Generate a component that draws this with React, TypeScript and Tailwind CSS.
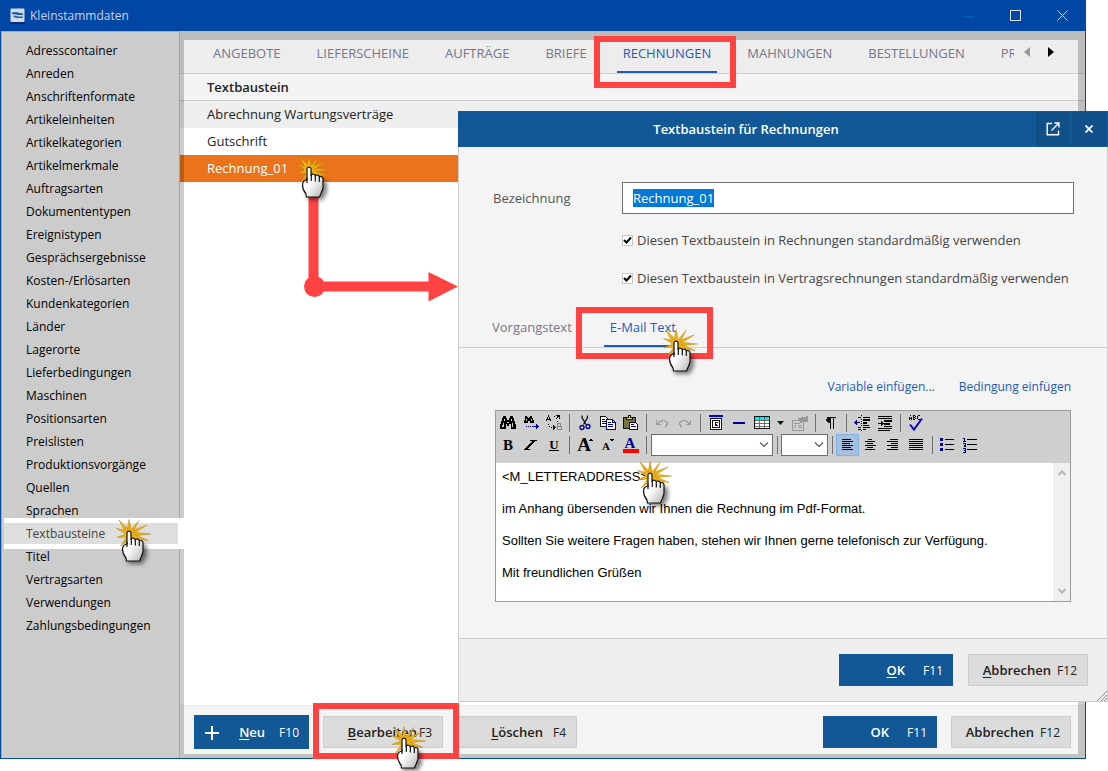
import React, { useEffect, useRef } from "react";

const navItems = [
  "Adresscontainer", "Anreden", "Anschriftenformate", "Artikeleinheiten", "Artikelkategorien",
  "Artikelmerkmale", "Auftragsarten", "Dokumententypen", "Ereignistypen", "Gesprächsergebnisse",
  "Kosten-/Erlösarten", "Kundenkategorien", "Länder", "Lagerorte", "Lieferbedingungen", "Maschinen",
  "Positionsarten", "Preislisten", "Produktionsvorgänge", "Quellen", "Sprachen", "Textbausteine",
  "Titel", "Vertragsarten", "Verwendungen", "Zahlungsbedingungen",
];

const docTabs = ["ANGEBOTE", "LIEFERSCHEINE", "AUFTRÄGE", "BRIEFE", "RECHNUNGEN", "MAHNUNGEN", "BESTELLUNGEN"];

const mailText = [
  "<M_LETTERADDRESS>",
  "im Anhang übersenden wir Ihnen die Rechnung im Pdf-Format.",
  "Sollten Sie weitere Fragen haben, stehen wir Ihnen gerne telefonisch zur Verfügung.",
  "Mit freundlichen Grüßen",
].join("\n\n");

/* ---------- shared pieces ---------- */

function Hand({ className }: { className: string }) {
  return (
    <svg className={`pointer-events-none absolute z-30 ${className}`} width="44" height="52" viewBox="-16 -14 44 52" aria-hidden="true">
      <defs>
        <linearGradient id="palm" x1="0" y1="0" x2="1" y2="1">
          <stop offset="0.45" stopColor="#fff" />
          <stop offset="1" stopColor="#b4b4b4" />
        </linearGradient>
        <filter id="soft" x="-50%" y="-50%" width="200%" height="200%">
          <feGaussianBlur stdDeviation="2" />
        </filter>
      </defs>
      <path d="M-4 10 L-6 16 L-3 30 H12 L16 22 V12 L4 6 Z" transform="translate(2 3)" fill="#000" opacity="0.5" filter="url(#soft)" />
      <g fill="#ecb112" stroke="#b88408" strokeWidth="0.5" strokeLinejoin="round">
        <path d="M0 -1 L-10 -11 L-4.500 -0.500 Z" />
        <path d="M-2 0 L0 -11.500 L2.500 0 Z" />
        <path d="M1 0 L10 -10.500 L4 1 Z" />
        <path d="M2 0 L18 -6 L4 3 Z" />
        <path d="M2 1 L21.500 3 L3 5 Z" />
        <path d="M2 2 L19 9.500 L3 7 Z" />
        <path d="M-1 0 L-12.500 -2.500 L-2 3.500 Z" />
        <path d="M-1 2 L-12 6.500 L-1 6 Z" />
        <path d="M-1 4 L-8.500 15 L2 7 Z" />
        <circle cx="0" cy="3" r="5" stroke="none" />
      </g>
      <path
        d="M-2 2 C-2 -0.500 2 -0.500 2 2 V8.500 C3 6.500 6 7 6.300 9 C7.500 7.200 10 8 10.300 10 C12 8.800 14 10 14 12 V20 C14 23 12.500 25 11.500 27.500 L10.500 30 H-2.500 L-3 27 C-5.500 24 -6.500 22 -6.500 18 C-6.500 15 -5 13.500 -2 13 Z"
        fill="url(#palm)"
        stroke="#111"
        strokeWidth="1.200"
        strokeLinejoin="round"
      />
      <path d="M-2 11 V16 M2.300 8 V14 M6.300 9 V14.500 M10.300 10 V15" stroke="#111" strokeWidth="1.200" fill="none" />
    </svg>
  );
}

function Frame({ className }: { className: string }) {
  return <div className={`pointer-events-none absolute z-20 border-[6px] border-[#ff4343] ${className}`} />;
}

type ActionProps = { children: React.ReactNode; hotkey: string; primary?: boolean; className?: string; icon?: React.ReactNode };
function Action({ children, hotkey, primary, className = "", icon }: ActionProps) {
  const tone = primary ? "bg-[#125796] text-white" : "border border-[#cdcdcd] bg-[#dcdcdc] text-[#222]";
  return (
    <button type="button" className={`relative flex h-8 shrink-0 items-center justify-end pt-0.5 pr-2.5 text-[13px] ${tone} ${className}`}>
      {icon}
      <span className="font-semibold underline-offset-2">{children}</span>
      <span className="text-[12px]">{hotkey}</span>
    </button>
  );
}

/* ---------- editor toolbar ---------- */

function Tool({ label, children, active }: { label: string; children: React.ReactNode; active?: boolean }) {
  return (
    <button
      type="button"
      aria-label={label}
      className={`flex h-[22px] w-[23px] shrink-0 items-center justify-center ${active ? "border border-[#7cb4e8] bg-[#a5c0dc]" : ""}`}
    >
      <svg width="18" height="18" viewBox="0 0 18 18" shapeRendering="crispEdges" fill="none" className="overflow-visible">
        {children}
      </svg>
    </button>
  );
}

function Sep() {
  return (
    <span className="flex h-[22px] w-2 shrink-0 justify-center py-0.5">
      <span className="w-px bg-[#6f6f6f]" />
    </span>
  );
}

function Lines({ rows, color = "#000" }: { rows: number[][]; color?: string }) {
  return (
    <g fill={color}>
      {rows.map(([x, y, w], i) => (
        <rect key={i} x={x} y={y} width={w} height="1" />
      ))}
    </g>
  );
}

function Toolbar() {
  return (
    <div className="flex flex-col bg-[#cfcfcf] pt-px pb-[7px]">
      <div className="flex">
        <Tool label="Suchen">
          <path fill="#000" d="M4 2h3v2h1v2h2V4h1V2h3v2h1v3h1v3h1v5h-5v-5h-2v2H8v-2H7v5H1v-5h1V7h1V4h1z" />
          <path fill="#cfcfcf" d="M5 5h1v2H5zM12 5h1v2h-1zM4 9h1v4H3v-2h1zM13 9h1v4h-1zM8 8h2v1H8z" />
        </Tool>
        <Tool label="Weitersuchen">
          <path fill="#000" d="M3 2h2v1h1v1h1V3h1V2h2v2h1v2h1v3H8V7H6v2H2V6h1z" />
          <path fill="#cfcfcf" d="M4 5h1v2H4zM9 5h1v2H9z" />
          <path fill="#000090" d="M4 12h1v1H4zM6 12h1v1H6zM8 12h1v1H8zM10 12h4v-2h1v1h1v1h1v1h-1v1h-1v1h-1v-2h-4z" />
        </Tool>
        <Tool label="Ersetzen">
          <path stroke="#111" d="M1.500 7V5M5.500 7V5M2.500 5V3M4.500 5V3M3.500 3V1M2 5.500h3" />
          <path fill="#111" d="M9 2h1v1H9zM11 1h4v4h-1V3h-1v1h-1v1h-1V4h1V2h-1zM12 7h1v1h-1zM3 10h1v1H3zM4 12h1v1H4zM6 13h1v1H6zM8 11h1v1h1v1h1v1h-1v1H9v1H8z" />
          <path stroke="#8a8a8a" d="M12.500 16V9.500H15V12H13M15 12.500h1V15.500h-3" />
        </Tool>
        <Sep />
        <Tool label="Ausschneiden">
          <path stroke="#111" shapeRendering="auto" strokeWidth="1.300" d="M6 1.500v2l4 7M11.500 1.500v2L7.500 10.500" />
          <circle cx="6" cy="13.500" r="2" stroke="#000090" shapeRendering="auto" strokeWidth="1.300" />
          <circle cx="12" cy="12.500" r="2" stroke="#000090" shapeRendering="auto" strokeWidth="1.300" />
        </Tool>
        <Tool label="Kopieren">
          <path fill="#fff" stroke="#111" d="M1.500 2.500h5l3 3v7h-8z" />
          <path stroke="#111" d="M3 5.500h3M3 7.500h4M3 9.500h4" />
          <path fill="#fff" stroke="#000090" d="M7.500 5.500h6l3 3v7h-9z" />
          <path stroke="#000090" d="M9 8.500h3M9 10.500h5M9 12.500h5M13.500 5v3.500h3" />
        </Tool>
        <Tool label="Einfügen">
          <path fill="#77743c" stroke="#111" d="M1.500 3.500h12v11h-12z" />
          <path fill="#e8e35a" stroke="#111" d="M4.500 4.500v-1h2v-2h2v2h2v2h-6z" />
          <path fill="#fff" stroke="#000090" d="M7.500 8.500h6l2 2v5h-8z" />
          <path stroke="#000090" d="M9 10.500h3M9 12.500h5" />
        </Tool>
        <Sep />
        <Tool label="Rückgängig">
          <path fill="#9b9b9b" d="M3 6h1v3h1V8h1V7h2V6h4v1h2v1h1v3h-1v2h-2v-1h1v-2h1V9h-1V8h-1V7H9v1H7v1H6v1h2v1H3z" />
        </Tool>
        <Tool label="Wiederholen">
          <path fill="#9b9b9b" d="M15 6h-1v3h-1V8h-1V7h-2V6H6v1H4v1H3v3h1v2h2v-1H5v-2H4V9h1V8h1V7h3v1h2v1h1v1h-2v1h5z" />
        </Tool>
        <Sep />
        <Tool label="Feld einfügen">
          <path fill="#0000ff" d="M2 1h14v2H2z" />
          <path fill="#fff" stroke="#111" d="M3.500 4.500h11v11h-11z" />
          <path stroke="#111" d="M5.500 6.500h7v7h-7zM11 8.500H8V11M8 10.500h2M8 10v2M8 11.500h3" />
        </Tool>
        <Tool label="Linie">
          <path fill="#000090" d="M3 8h12v2H3z" />
        </Tool>
        <Tool label="Tabelle">
          <path fill="#fff" d="M1 3h16v12H1z" />
          <path fill="#00f0f0" d="M1 3h16v3H1z" />
          <path stroke="#6b6b6b" d="M6.500 3v12M11.500 3v12M1 6.500h16M1 9.500h16M1 12.500h16" />
          <path stroke="#111" d="M1.500 2.500h15v12h-15z" />
        </Tool>
        <button type="button" aria-label="Tabelle auswählen" className="flex h-[22px] w-[15px] shrink-0 items-center justify-center">
          <svg width="7" height="4" viewBox="0 0 7 4"><path d="M0 0h7L3.500 4z" fill="#111" /></svg>
        </button>
        <Tool label="Eigenschaften">
          <path stroke="#999" d="M1.500 6.500h11v10h-11zM3 9.500h6M3 11.500h2M7 11.500h4M3 13.500h2M7 13.500h4" />
          <path fill="#999" d="M7 4h3V3h6v5h-5v1H9V7H7zM15 2h2v6h-2z" />
        </Tool>
        <Sep />
        <Tool label="Absatzmarken">
          <path fill="#111" d="M5 3h9v1h-2v11h-1V4h-2v11H8V9H6V8H5V7H4V5h1z" />
        </Tool>
        <Sep />
        <Tool label="Einzug verkleinern">
          <Lines rows={[[5, 3, 3], [10, 3, 7], [5, 13, 3], [10, 13, 7], [5, 15, 3], [10, 15, 3], [10, 5, 7], [10, 6, 7], [10, 8, 4], [10, 9, 4], [10, 11, 6]]} />
          <path fill="#111" d="M8 1h1v1H8zM8 5h1v1H8zM8 7h1v1H8zM8 9h1v1H8zM8 11h1v1H8zM8 16h1v1H8z" />
          <path fill="#000090" d="M1 8h1V7h1V6h1v2h3v1H4v2H3v-1H2V9H1z" />
        </Tool>
        <Tool label="Einzug vergrößern">
          <Lines rows={[[2, 2, 14], [2, 4, 14], [8, 6, 8], [8, 7, 8], [8, 9, 6], [8, 10, 6], [8, 12, 8], [2, 14, 14], [2, 16, 12]]} />
          <path fill="#111" d="M2 9h3V7h1v1h1v1h1v1H7v1H6v1H5v-2H2z" />
        </Tool>
        <Sep />
        <Tool label="Rechtschreibung">
          <path stroke="#111" d="M2.500 6V2.500M4.500 6V2.500M3 1.500h1M2 4.500h3M6.500 1v5M6 1.500h2M6 3.500h2M6 5.500h2M8.500 2v1M8.500 4v1M13 1.500h-2M10.500 2v3M11 5.500h2" />
          <path stroke="#1200b8" strokeWidth="2" shapeRendering="auto" d="M3 10.500l4 5L15 4.500" />
        </Tool>
      </div>
      <div className="flex">
        <Tool label="Fett">
          <text x="9" y="14" textAnchor="middle" fontFamily="Liberation Serif, serif" fontWeight="700" fontSize="15" fill="#000">B</text>
        </Tool>
        <Tool label="Kursiv">
          <path fill="#000" d="M8 4h7v1h-2v1h-1v1h-1v1h-1v1h-1v1H8v1H7v1H6v1h2v1H2v-1h1v-1h1v-1h1v-1h1V9h1V8h1V7h1V6h1V5H8z" />
        </Tool>
        <Tool label="Unterstrichen">
          <text x="9" y="13" textAnchor="middle" fontFamily="Liberation Serif, serif" fontWeight="700" fontSize="13" fill="#000">U</text>
          <path fill="#000" d="M4 14h10v1H4z" />
        </Tool>
        <Sep />
        <Tool label="Schrift vergrößern">
          <text x="8" y="15" textAnchor="middle" fontFamily="Liberation Serif, serif" fontWeight="700" fontSize="19" fill="#000">A</text>
          <path fill="#000" d="M13 5h4V4h-1V3h-2v1h-1z" />
        </Tool>
        <Tool label="Schrift verkleinern">
          <text x="7" y="14" textAnchor="middle" fontFamily="Liberation Serif, serif" fontWeight="700" fontSize="11" fill="#000">A</text>
          <path fill="#000" d="M11 3h4v1h-1v1h-2V4h-1z" />
        </Tool>
        <Tool label="Schriftfarbe">
          <text x="8" y="12" textAnchor="middle" fontFamily="Liberation Serif, serif" fontWeight="700" fontSize="15" fill="#000090">A</text>
          <path fill="#f00" d="M1 13h16v4H1z" />
        </Tool>
        <Sep />
        <Combo label="Schriftart" className="ml-px w-[122px]" />
        <Sep />
        <Combo label="Schriftgröße" className="w-[47px]" />
        <Sep />
        <Tool label="Linksbündig" active>
          <Lines rows={[[3, 3, 9], [3, 5, 11], [3, 7, 8], [3, 9, 11], [3, 11, 9], [3, 13, 11]]} />
        </Tool>
        <Tool label="Zentriert">
          <Lines rows={[[6, 3, 4], [3, 5, 10], [5, 7, 6], [3, 9, 11], [5, 11, 6], [3, 13, 10]]} />
        </Tool>
        <Tool label="Rechtsbündig">
          <Lines rows={[[5, 3, 8], [2, 5, 11], [6, 7, 7], [2, 9, 11], [6, 11, 7], [2, 13, 11]]} />
        </Tool>
        <Tool label="Blocksatz">
          <Lines rows={[[1, 3, 14], [1, 5, 14], [1, 7, 14], [1, 9, 14], [1, 11, 14], [1, 13, 14]]} />
        </Tool>
        <Sep />
        <Tool label="Aufzählung">
          <path fill="#000090" d="M1 2h3v3H1zM1 7h3v3H1zM1 12h3v3H1z" />
          <Lines rows={[[6, 3, 9], [6, 8, 9], [6, 13, 9]]} />
        </Tool>
        <Tool label="Nummerierung">
          <path stroke="#000090" d="M1 2.500h1.500V5M1 5.500h3M1 7.500h2.500V9H2v1.500h2M1 12.500h2.500v4H1M2 14.500h1.500" />
          <Lines rows={[[5, 3, 10], [5, 8, 10], [5, 13, 10]]} />
        </Tool>
      </div>
    </div>
  );
}

function Combo({ label, className }: { label: string; className: string }) {
  return (
    <span className={`relative flex h-[22px] shrink-0 ${className}`}>
      <select aria-label={label} className="w-full appearance-none border border-[#6e6e6e] bg-white" />
      <svg className="pointer-events-none absolute top-2 right-1" width="10" height="6" viewBox="0 0 10 6" fill="none" stroke="#555" strokeWidth="1.200">
        <path d="M1 0.500l4 4 4-4" />
      </svg>
    </span>
  );
}

/* ---------- dialog ---------- */

function Check({ id, children }: { id: string; children: React.ReactNode }) {
  return (
    <div className="flex h-[38px] items-center gap-1">
      <span className="relative flex size-[11px] shrink-0">
        <input id={id} type="checkbox" defaultChecked className="size-[11px] appearance-none border border-[#c8c8c8] bg-white" />
        <svg className="pointer-events-none absolute inset-0" width="11" height="11" viewBox="0 0 11 11" fill="none" stroke="#000" strokeWidth="2">
          <path d="M2 5l2.500 2.500L9 2.500" />
        </svg>
      </span>
      <label htmlFor={id} className="pt-0.5 text-[13px] font-medium whitespace-nowrap text-[#444]">{children}</label>
    </div>
  );
}

function Dialog() {
  const nameRef = useRef<HTMLInputElement>(null);
  useEffect(() => {
    nameRef.current?.focus();
    nameRef.current?.select();
  }, []);
  return (
    <section role="dialog" aria-label="Textbaustein für Rechnungen" className="absolute top-[111px] right-0 left-[458px] z-10 flex flex-col bg-[#f4f4f4]">
      <header className="flex h-9 items-stretch gap-0.5 bg-[#125796] pr-0.5 text-white">
        <h2 className="flex-1 self-center pt-0.5 text-center text-[13px] font-semibold">Textbaustein für Rechnungen</h2>
        <button type="button" aria-label="In neuem Fenster öffnen" className="my-px flex w-[34px] items-center justify-center bg-[#114f89]">
          <svg width="14" height="14" viewBox="0 0 14 14" fill="none" stroke="#fff" strokeWidth="1.400">
            <path d="M6 1.500H1.200V12.800H12.500V8.500M8.500 1H13V5.500M13 1L5.500 8.500" />
          </svg>
        </button>
        <button type="button" aria-label="Schließen" className="my-px flex w-[34px] items-center justify-center bg-[#114f89]">
          <svg width="8" height="8" viewBox="0 0 8 8" stroke="#fff" strokeWidth="1.800">
            <path d="M0.500 0.500l7 7M7.500 0.500l-7 7" />
          </svg>
        </button>
      </header>
      <div className="flex flex-col border border-t-0 border-[#cccccc]">
        <div className="flex items-center pt-[35px] pr-[33px] pl-[34px]">
          <label htmlFor="name" className="w-[129px] shrink-0 pt-0.5 text-[13px] font-medium text-[#555]">Bezeichnung</label>
          <input
            ref={nameRef}
            id="name"
            defaultValue="Rechnung_01"
            className="h-8 min-w-0 flex-1 border border-[#6e6e6e] bg-white px-2.5 text-[13px] leading-[17px] text-[#222] outline-none selection:bg-[#0078d7] selection:text-white"
          />
        </div>
        <div className="pt-[7px] pl-[163px]">
          <Check id="std">Diesen Textbaustein in Rechnungen standardmäßig verwenden</Check>
          <Check id="contract">Diesen Textbaustein in Vertragsrechnungen standardmäßig verwenden</Check>
        </div>
        <div role="tablist" className="mt-3 flex h-[39px] gap-[26px] border-b border-[#cccccc] pl-[27px] text-[13px] font-medium">
          <button type="button" role="tab" aria-selected="false" className="px-1.5 text-[#76768c]">Vorgangstext</button>
          <button type="button" role="tab" aria-selected="true" className="border-b-2 border-[#1f5bb8] px-1.5 pt-0.5 text-[#1f5bb8]">E-Mail Text</button>
        </div>
        <div className="flex justify-end gap-6 pt-[30px] pr-[36px] text-[12px] leading-[18px] text-[#1f5bb8]">
          <a href="#variable">Variable einfügen...</a>
          <a href="#bedingung">Bedingung einfügen</a>
        </div>
        <div className="mx-9 mt-[14px] flex flex-col border border-[#9b9b9b]">
          <Toolbar />
          <div className="flex">
            <textarea
              aria-label="E-Mail Text"
              defaultValue={mailText}
              spellCheck={false}
              className="h-[138px] flex-1 resize-none overflow-hidden bg-white px-1.5 py-1.5 font-['Liberation_Sans',Arial,sans-serif] text-[13px] leading-4 text-black outline-none"
            />
            <div className="flex w-[17px] flex-col items-center justify-between bg-[#f0f0f0] py-[7px]">
              <svg width="8" height="6" viewBox="0 0 8 6" fill="none" stroke="#b8b8b8" strokeWidth="2"><path d="M0.500 5L4 1.500 7.500 5" /></svg>
              <svg width="8" height="6" viewBox="0 0 8 6" fill="none" stroke="#b8b8b8" strokeWidth="2"><path d="M0.500 1L4 4.500 7.500 1" /></svg>
            </div>
          </div>
        </div>
        <footer className="relative mt-9 flex h-[63px] justify-end gap-[15px] border-t border-[#cccccc] bg-[#eeeeee] pt-[15px] pr-[19px]">
          <Action primary hotkey="F11" className="w-[114px] gap-[18px]"><u>O</u>K</Action>
          <Action hotkey="F12" className="w-[120px] gap-1.5"><u>A</u>bbrechen</Action>
          <svg className="absolute right-0 bottom-0" width="10" height="10" viewBox="0 0 10 10" stroke="#8c8c8c"><path d="M0 10L10 0M4 10l6-6M7 10l3-3" /></svg>
        </footer>
      </div>
    </section>
  );
}

/* ---------- main window ---------- */

function TitleBar() {
  return (
    <header className="flex h-[31px] shrink-0 items-center bg-[#0046a5] pr-[17px] pl-[9px]">
      <svg width="15" height="16" viewBox="0 0 15 16" aria-hidden="true">
        <rect x="0.500" y="0.500" width="14" height="13.500" rx="1" fill="#d4dae2" />
        <path d="M2 4.500C4 3.500 7 4 9 4.700C10.500 5.200 12 5 13 5.500V7H8L2 6z" fill="#1b5fa8" />
        <path d="M2 8C5 7.500 7 8 8 8.500H13V10H3.500L6 9.200z" fill="#1b5fa8" />
        <path d="M0 14.500h15v1.500H0z" fill="#05225a" />
      </svg>
      <h1 className="flex-1 pl-[5px] text-[12px] text-[#c9d3e6]">Kleinstammdaten</h1>
      <div className="flex gap-9">
        <button type="button" aria-label="Minimieren"><svg width="10" height="10" viewBox="0 0 10 10"><path d="M0 5.500h10" stroke="#0064b8" /></svg></button>
        <button type="button" aria-label="Maximieren"><svg width="11" height="11" viewBox="0 0 11 11"><path d="M0.500 0.500h10v10h-10z" fill="none" stroke="#e3e8f0" /></svg></button>
        <button type="button" aria-label="Schließen"><svg width="11" height="11" viewBox="0 0 11 11"><path d="M0.500 0.500l10 10M10.500 0.500l-10 10" stroke="#d3dcea" /></svg></button>
      </div>
    </header>
  );
}

function SideNav() {
  return (
    <nav className="w-[179px] shrink-0 border-t border-r border-l border-[#a3a3bd] bg-[#cccccc] pt-[7px]">
      <ul className="text-[12px] leading-[23px] text-black">
        {navItems.map((item) =>
          item === "Textbausteine" ? (
            <li key={item} className="relative z-10 -my-1 mr-[-5px] ml-0.5 bg-white py-[5px] pr-[6px]">
              <a href="#item" aria-current="page" className="block bg-[#dedede] pl-[22px] leading-[21px] text-[#444]">{item}</a>
            </li>
          ) : (
            <li key={item}><a href="#item" className="block pl-6">{item}</a></li>
          ),
        )}
      </ul>
    </nav>
  );
}

function Content() {
  return (
    <main className="relative flex min-w-0 flex-1 flex-col bg-white">
      <div className="flex h-[43px] shrink-0 items-start border-b border-[#cfcfcf] bg-[#ededed] pt-[9px] pr-[31px] pl-[27px] text-[13px] text-[#76768c]">
        <div role="tablist" className="flex h-[33px] min-w-0 flex-1 gap-6 overflow-hidden">
          {docTabs.map((tab) => {
            const on = tab === "RECHNUNGEN";
            return (
              <button
                key={tab}
                type="button"
                role="tab"
                aria-selected={on}
                className={`flex flex-col px-1.5 ${on ? "border-b-2 border-[#1f5bb8] font-medium text-[#1f5bb8]" : ""}`}
              >
                <span className="leading-[27px]">{tab}</span>
              </button>
            );
          })}
          <button type="button" role="tab" aria-selected="false" className="ml-1.5 flex w-[13px] overflow-hidden leading-[27px]">PR</button>
        </div>
        <div className="flex gap-[18px] pt-[7px]">
          <button type="button" aria-label="Zurück"><svg width="6" height="10" viewBox="0 0 6 10"><path d="M6 0v10L0 5z" fill="#999" /></svg></button>
          <button type="button" aria-label="Weiter"><svg width="6" height="10" viewBox="0 0 6 10"><path d="M0 0v10l6-5z" fill="#000" /></svg></button>
        </div>
      </div>
      <table className="w-full text-left text-[13px] text-[#222]">
        <thead>
          <tr className="h-[26px] border-b border-[#cfcfcf] bg-[#f3f3f3]"><th className="p-0 pt-0.5 pl-[27px] leading-[23px] font-semibold">Textbaustein</th></tr>
        </thead>
        <tbody className="leading-[27px]">
          <tr className="bg-[#efefef]"><td className="p-0 pl-[27px]">Abrechnung Wartungsverträge</td></tr>
          <tr><td className="p-0 pl-[27px]">Gutschrift</td></tr>
          <tr className="bg-[#ea731b] text-white"><td className="p-0 pl-[27px]">Rechnung_01</td></tr>
        </tbody>
      </table>
      <footer className="mt-auto flex h-[53px] shrink-0 items-start gap-[14px] border-t border-[#ebebeb] bg-[#f4f4f4] pt-2.5 pr-[14px] pl-3.5">
        <Action
          primary
          hotkey="F10"
          className="-my-px h-[34px] w-[115px] gap-3.5"
          icon={<svg className="absolute left-[11px]" width="14" height="14" viewBox="0 0 14 14" stroke="#fff" strokeWidth="2"><path d="M7 0v14M0 7h14" /></svg>}
        ><u>N</u>eu</Action>
        <Action hotkey="F3" className="w-[120px] gap-0.5"><u>B</u>earbeiten</Action>
        <Action hotkey="F4" className="mr-auto w-[120px] gap-2.5"><u>L</u>öschen</Action>
        <Action primary hotkey="F11" className="w-[114px] gap-[18px]">OK</Action>
        <Action hotkey="F12" className="w-[120px] gap-1.5">Abbrechen</Action>
      </footer>
      <div className="pointer-events-none absolute inset-0 border-t-[9px] border-r-[7px] border-b-4 border-l-4 border-black/20" />
    </main>
  );
}

export default function App() {
  return (
    <div className="relative flex min-h-screen flex-col overflow-hidden bg-white pr-[22px] pb-3 font-['Open_Sans','Segoe_UI',sans-serif]">
      <div className="flex flex-1 flex-col border border-t-0 border-[#004a9f]">
        <TitleBar />
        <div className="flex flex-1">
          <SideNav />
          <Content />
        </div>
      </div>

      <svg className="pointer-events-none absolute top-[190px] left-[300px]" width="160" height="114" viewBox="0 0 160 114" fill="#ff4343" aria-hidden="true">
        <path d="M8.500 0h10v96h-10zM14 91.500h115v10H14zM128.500 82l29.500 14.500-29.500 15z" />
        <circle cx="14.500" cy="96.500" r="10.500" />
      </svg>

      <Dialog />

      <Frame className="top-[36px] left-[594px] h-[52px] w-[142px]" />
      <Frame className="top-[307px] left-[576px] h-[52px] w-[137px]" />
      <Frame className="top-[703px] left-[313px] h-[56px] w-[146px]" />

      <Hand className="top-[153px] left-[293px]" />
      <Hand className="top-[517px] left-[113px]" />
      <Hand className="top-[327px] left-[660px]" />
      <Hand className="top-[459px] left-[634px]" />
      <Hand className="top-[724px] left-[388px]" />
    </div>
  );
}
